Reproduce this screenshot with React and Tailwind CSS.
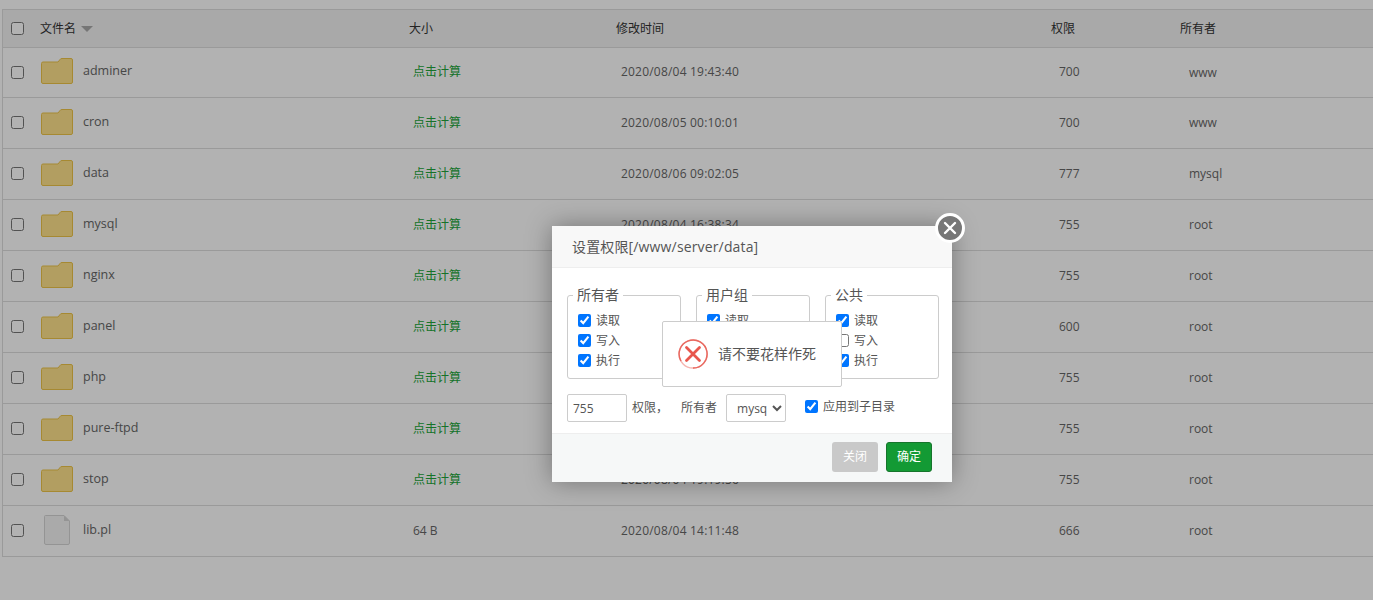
const font = '[font-family:"Open_Sans","Noto_Sans_CJK_SC",sans-serif]';

const rows = [
  { name: 'adminer', time: '2020/08/04 19:43:40', perm: '700', owner: 'www', h: 'h-[50px]' },
  { name: 'cron', time: '2020/08/05 00:10:01', perm: '700', owner: 'www' },
  { name: 'data', time: '2020/08/06 09:02:05', perm: '777', owner: 'mysql' },
  { name: 'mysql', time: '2020/08/04 16:38:34', perm: '755', owner: 'root' },
  { name: 'nginx', time: '2020/08/04 16:38:34', perm: '755', owner: 'root' },
  { name: 'panel', time: '2020/08/04 14:11:48', perm: '600', owner: 'root' },
  { name: 'php', time: '2020/08/04 16:38:34', perm: '755', owner: 'root' },
  { name: 'pure-ftpd', time: '2020/08/04 19:19:56', perm: '755', owner: 'root' },
  { name: 'stop', time: '2020/08/04 19:19:56', perm: '755', owner: 'root' },
  { name: 'lib.pl', time: '2020/08/04 14:11:48', perm: '666', owner: 'root', size: '64 B', file: true },
];

function FolderIcon() {
  return (
    <svg width="32" height="26" viewBox="0 0 32 26" className="block">
      <path
        d="M.5 5.5 Q.5 4 2 4 H17 L19 1.5 Q19.5 .5 21 .5 H30 Q31.5 .5 31.5 2 V24 Q31.5 25.5 30 25.5 H2 Q.5 25.5 .5 24 Z"
        fill="#ffe28c"
        stroke="#eec548"
        strokeWidth="1"
      />
    </svg>
  );
}

function FileIcon() {
  return (
    <svg width="26" height="30" viewBox="0 0 26 30" className="block">
      <path
        d="M1.5 .5 H20 L25.5 6 V28 Q25.5 29.5 24 29.5 H2 Q.5 29.5 .5 28 V1.5 Q.5 .5 1.5 .5 Z"
        fill="#f4f4f4"
        stroke="#d4d4d4"
        strokeWidth="1"
      />
      <path d="M20 .5 V6 H25.5 Z" fill="#d4d4d4" />
    </svg>
  );
}

function FileRow({ row }) {
  return (
    <div className={`grid grid-cols-[30px_370px_207px_435px_129px_1fr] items-center border-b border-[#ddd] text-xs text-[#666] ${row.h || 'h-[51px]'}`}>
      <div className="-mt-[1px] flex pl-2">
        <input type="checkbox" className="m-0 size-[13px]" />
      </div>
      <div className="flex items-center">
        <div className="-mt-[3px] flex w-[50px] justify-center pr-[2px]">
          {row.file ? <FileIcon /> : <FolderIcon />}
        </div>
        <span className="-mt-[2px] text-[12.5px]">{row.name}</span>
      </div>
      <div className={`-mt-[1px] pl-[10px] ${row.file ? '' : 'text-[#20a53a]'}`}>{row.size || '点击计算'}</div>
      <div className="-mt-[1px] pl-[11px] tracking-[0.2px]">{row.time}</div>
      <div className="-mt-[1px] pl-[14px]">{row.perm}</div>
      <div className="pl-[15px]">{row.owner}</div>
    </div>
  );
}

function PermGroup({ title, write = true }) {
  return (
    <fieldset className="h-[94px] w-[114px] shrink-0 rounded-[3px] border border-[#ccc] pl-[10px]">
      <legend className="-ml-[5px] px-[4px] text-sm leading-[20px] text-[#555]">{title}</legend>
      <div className="mt-[7px] flex flex-col gap-[3px] text-xs text-[#555]">
        <label className="flex h-[17px] items-center gap-[5px]">
          <input type="checkbox" defaultChecked className="m-0 size-[13px]" />读取
        </label>
        <label className="flex h-[17px] items-center gap-[5px]">
          <input type="checkbox" defaultChecked={write} className="m-0 size-[13px]" />写入
        </label>
        <label className="flex h-[17px] items-center gap-[5px]">
          <input type="checkbox" defaultChecked className="m-0 size-[13px]" />执行
        </label>
      </div>
    </fieldset>
  );
}

function PermDialog() {
  return (
    <div className="absolute top-[226px] left-[552px] w-[400px] bg-white shadow-[0_0_24px_rgba(0,0,0,0.35)]">
      <div className="flex h-[42px] items-center border-b border-[#eee] bg-[#f8f8f8] pl-5 text-sm tracking-[0.15px] text-[#555]">
        设置权限[/www/server/data]
      </div>
      <div className="h-[165px] px-[15px] pt-[17px]">
        <div className="flex gap-[15px]">
          <PermGroup title="所有者" />
          <PermGroup title="用户组" />
          <PermGroup title="公共" write={false} />
        </div>
        <div className="mt-[15px] flex items-center text-xs text-[#555]">
          <input
            defaultValue="755"
            className="h-[28px] w-[60px] rounded-[2px] border border-[#ccc] pl-[5px] text-xs text-[#555] outline-none"
          />
          <span className="ml-[5px]">权限，</span>
          <span className="ml-[13px]">所有者</span>
          <select className="ml-[9px] h-[28px] w-[60px] rounded-[2px] border border-[#ccc] bg-white pr-[2px] pl-[6px] text-xs text-[#555]">
            <option>mysql</option>
            <option>www</option>
            <option>root</option>
          </select>
          <label className="-mt-[3px] ml-[19px] flex items-center gap-[5px]">
            <input type="checkbox" defaultChecked className="m-0 size-[13px]" />应用到子目录
          </label>
        </div>
      </div>
      <div className="flex h-[49px] items-center justify-end gap-2 border-t border-[#eee] bg-[#f6f8f8] pr-5 pb-[2px]">
        <button className="h-[30px] w-[46px] rounded-[3px] bg-[#c9c9c9] text-xs text-white">关闭</button>
        <button className="h-[30px] w-[46px] rounded-[3px] border border-[#16752c] bg-[#139a34] text-xs text-white">确定</button>
      </div>
      <button className="absolute -top-[13px] -right-[13px] flex size-[30px] items-center justify-center rounded-full border-[3px] border-white bg-[#777]">
        <svg width="14" height="14" viewBox="0 0 14 14">
          <path d="M2 2 L12 12 M12 2 L2 12" stroke="#fff" strokeWidth="2.4" strokeLinecap="round" />
        </svg>
      </button>
    </div>
  );
}

function Toast() {
  return (
    <div className="absolute top-[321px] left-[662px] flex h-[66px] w-[180px] items-center rounded-[2px] border border-[#ccc] bg-white pl-[15px] text-sm text-[#555]">
      <svg width="30" height="30" viewBox="0 0 30 30" className="shrink-0">
        {/* ring fades out at the lower left in the original */}
        <circle cx="15" cy="15" r="14" fill="none" stroke="#f6b5b0" strokeWidth="1.4" />
        <path d="M15 29 A14 14 0 1 0 3 22" fill="none" stroke="#e8685f" strokeWidth="1.4" />
        <path d="M8.5 8.5 L21.5 21.5 M21.5 8.5 L8.5 21.5" stroke="#e8574d" strokeWidth="2.8" strokeLinecap="round" />
      </svg>
      <span className="ml-[10px]">请不要花样作死</span>
    </div>
  );
}

export default function App() {
  return (
    <div className={`relative h-[600px] w-full overflow-hidden bg-white ${font}`}>
      <div className="pt-[9px] pl-[2px]">
        <div className="border-t border-l border-[#ddd]">
          <div className="grid h-[38px] grid-cols-[30px_370px_207px_435px_129px_1fr] items-center border-b border-[#ddd] bg-[#f2f2f2] text-xs text-[#333]">
            <div className="flex pl-2">
              <input type="checkbox" className="m-0 size-[13px]" />
            </div>
            <div className="flex items-center pl-[7px]">
              文件名
              <span className="mt-[1px] ml-[5px] border-x-[6px] border-t-[6px] border-x-transparent border-t-[#aaa]" />
            </div>
            <div className="pl-[6px]">大小</div>
            <div className="pl-[6px]">修改时间</div>
            <div className="pl-[6px]">权限</div>
            <div className="pl-[6px]">所有者</div>
          </div>
          {rows.map((row) => (
            <FileRow key={row.name} row={row} />
          ))}
        </div>
      </div>
      <div className="absolute inset-0 bg-black/30" />
      <PermDialog />
      <Toast />
    </div>
  );
}
